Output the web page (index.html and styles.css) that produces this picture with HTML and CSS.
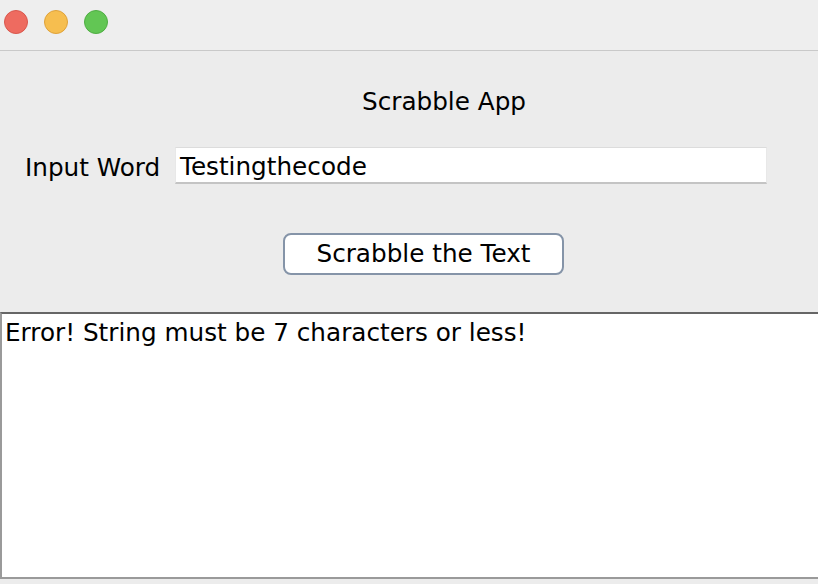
FILE: index.html
```html
<!DOCTYPE html>
<html>
<head>
<meta charset="utf-8">
<link rel="stylesheet" href="styles.css">
</head>
<body>
<div class="window">
  <div class="titlebar">
    <span class="light red"></span>
    <span class="light yellow"></span>
    <span class="light green"></span>
  </div>
  <div class="content">
    <div class="heading">Scrabble App</div>
    <div class="row">
      <label class="label">Input Word</label>
      <div class="field">Testingthecode</div>
    </div>
    <div class="actions">
      <button class="button">Scrabble the Text</button>
    </div>
  </div>
  <div class="output">Error! String must be 7 characters or less!</div>
  <div class="footer"></div>
</div>
</body>
</html>
```
FILE: styles.css
```css
html, body {
  margin: 0;
  padding: 0;
  background: #ececec;
}
body {
  width: 818px;
  height: 584px;
  overflow: hidden;
  font-family: "DejaVu Sans", sans-serif;
  font-size: 24.7px;
  color: #000;
}
.window {
  display: flex;
  flex-direction: column;
  height: 584px;
}
.titlebar {
  height: 50px;
  border-bottom: 1px solid #c9c9c9;
  background: #eeeeee;
  display: flex;
  align-items: center;
  gap: 16px;
  padding-left: 4px;
  box-sizing: content-box;
}
.light {
  width: 24px;
  height: 24px;
  border-radius: 50%;
  box-sizing: border-box;
  margin-top: -6px;
}
.red { background: #ee6b60; border: 1px solid #d9574d; }
.yellow { background: #f6be4f; border: 1px solid #dfa23a; }
.green { background: #62c654; border: 1px solid #4fad43; }
.content {
  height: 261px;
  display: flex;
  flex-direction: column;
}
.heading {
  margin-top: 37px;
  padding-left: 70px;
  text-align: center;
  line-height: 28px;
  height: 28px;
}
.row {
  display: flex;
  align-items: flex-start;
  margin-top: 31px;
  padding-left: 25px;
}
.label {
  width: 150px;
  line-height: 37px;
  padding-top: 2px;
}
.field {
  width: 592px;
  height: 37px;
  box-sizing: border-box;
  background: #fff;
  border-top: 1px solid #dcdcdc;
  border-left: 1px solid #e8e8e8;
  border-right: 1px solid #e8e8e8;
  border-bottom: 2px solid #c4c4c4;
  padding-left: 4px;
  line-height: 37px;
}
.actions {
  display: flex;
  padding-left: 283px;
  margin-top: 47px;
}
.button {
  width: 281px;
  height: 42px;
  box-sizing: border-box;
  background: #fff;
  border: 2px solid #8594a8;
  border-radius: 8px;
  font-family: inherit;
  font-size: 24.7px;
  color: #000;
  padding: 0;
  line-height: 36px;
}
.output {
  height: 267px;
  box-sizing: border-box;
  background: #fff;
  border-top: 2px solid #666;
  border-left: 2px solid #9a9a9a;
  border-bottom: 2px solid #9a9a9a;
  padding: 4px 3px;
  line-height: 30px;
}
.footer {
  flex: 1;
}
```
